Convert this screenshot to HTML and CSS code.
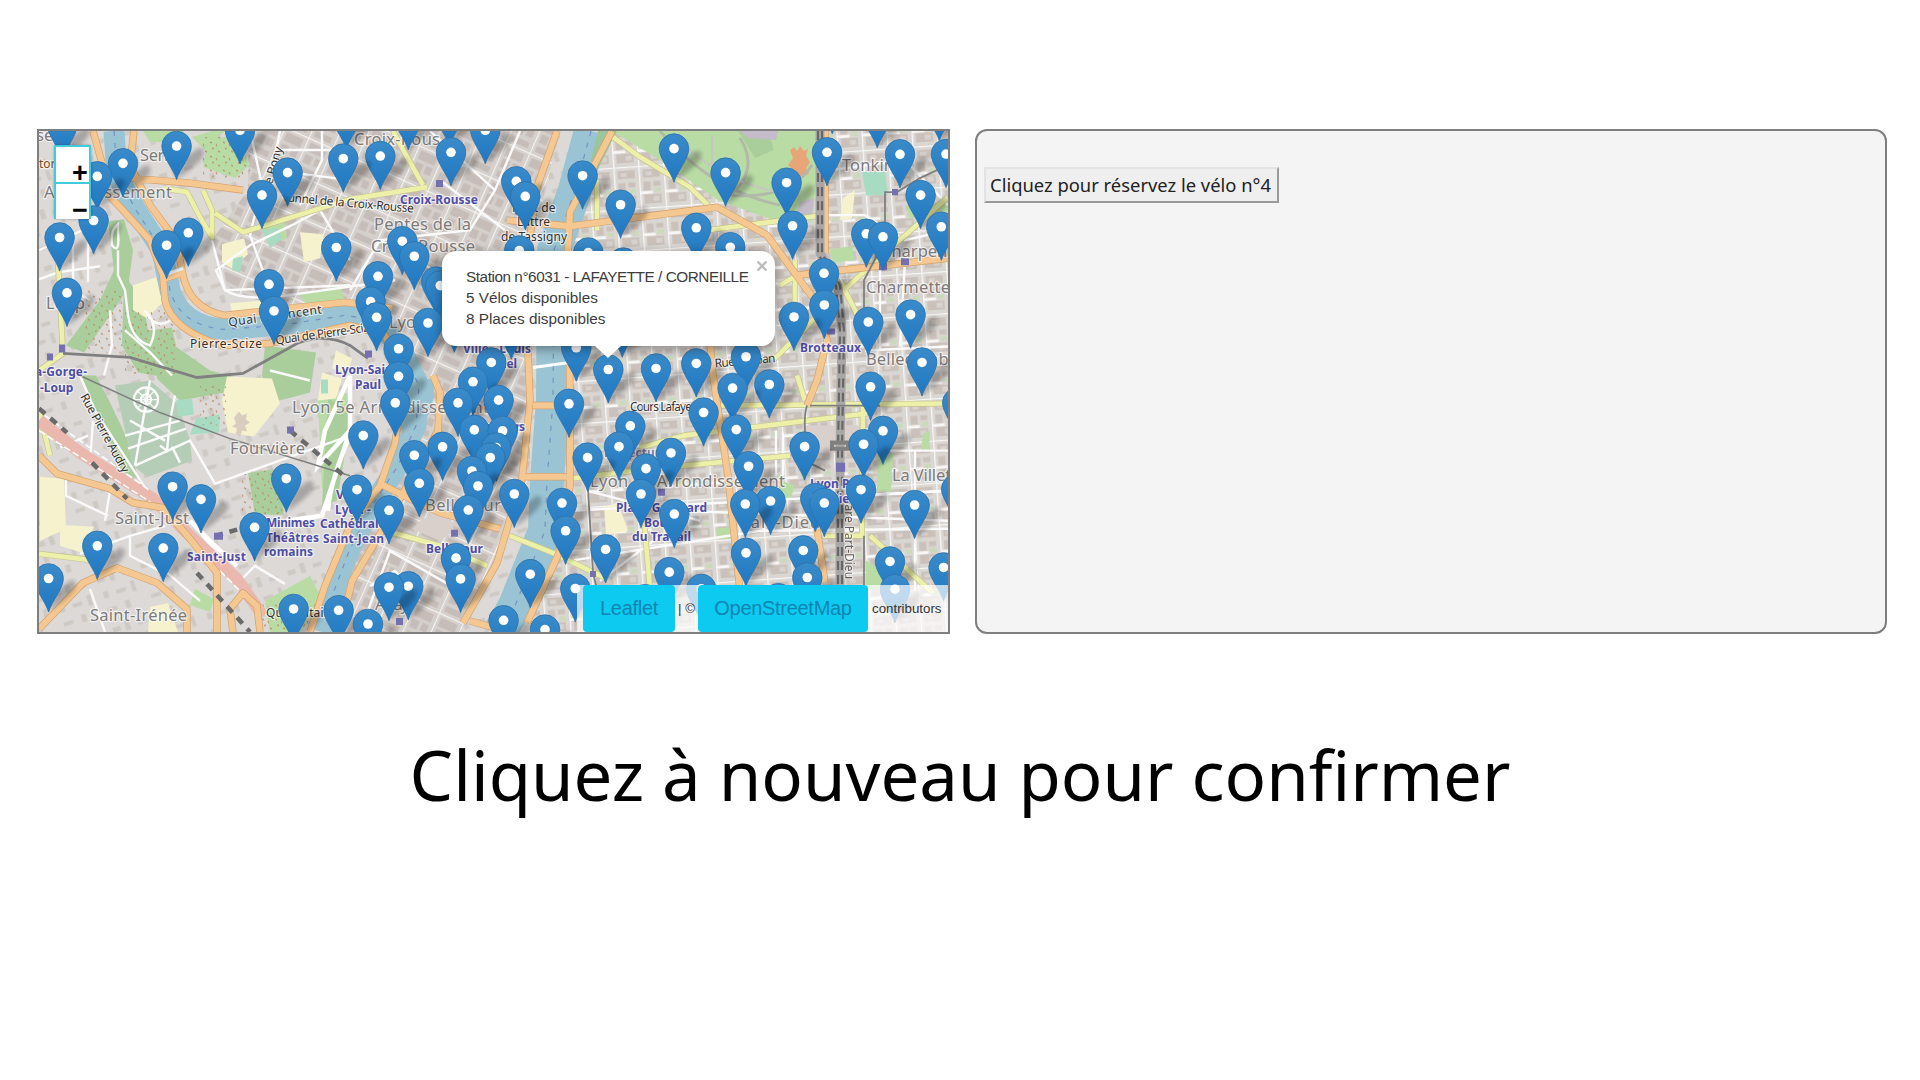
FILE: index.html
```html
<!DOCTYPE html>
<html lang="fr">
<head>
<meta charset="utf-8">
<title>Réservation de vélos</title>
<link rel="stylesheet" href="styles.css">
</head>
<body>
<main class="page">
  <div class="panels">
    <section class="map">
      <svg class="map-canvas" viewBox="39 131 909 500" preserveAspectRatio="none">
        <defs>
          <linearGradient id="pinFill" x1="0" y1="0" x2="0" y2="1">
            <stop offset="0" stop-color="#3a8bc9"/><stop offset="1" stop-color="#1f78c2"/>
          </linearGradient>
          <filter id="soft" x="-50%" y="-50%" width="200%" height="200%"><feGaussianBlur stdDeviation="2.2"/></filter>
          <g id="pin">
            <path d="M0 33L8 12L22 2Q30 2 26 11Q20 20 0 33Z" fill="#000" opacity=".24" filter="url(#soft)"/>
            <path d="M0 33.500C-3 23-14.800 10-14.800 0A14.800 14.800 0 0 1 14.800 0C14.800 10 3 23 0 33.500Z" fill="url(#pinFill)" stroke="#2a70ab" stroke-width=".8"/>
            <circle r="4.800" fill="#fff"/>
          </g>
          <pattern id="east" width="25" height="42" patternUnits="userSpaceOnUse" patternTransform="rotate(-4)">
            <rect width="25" height="42" fill="#dad6d2"/>
            <path d="M4 4h17v8H4zM4 16h7v9H4zM14 16h7v5h-7zM4 29h17v9H4z" fill="#cbc1bb"/>
            <path d="M7 6h6v4H7zM13 31h6v5h-6z" fill="#d8d3ce"/><path d="M15 23h6v4h-6z" fill="#c9dab9"/>
            <path d="M0 0V42M0 0H25M0 27H13" stroke="#f8f7f5" stroke-width="2.600" fill="none"/>
          </pattern>
          <pattern id="mid" width="26" height="38" patternUnits="userSpaceOnUse" patternTransform="rotate(24)">
            <rect width="26" height="38" fill="#d5d0cc"/>
            <path d="M4 4h18v9H4zM4 16h8v9H4zM15 16h7v8h-7zM4 29h18v6H4z" fill="#c7bdb8"/>
            <path d="M0 0V38M0 0H26" stroke="#f5f3f1" stroke-width="2.200" fill="none"/>
          </pattern>
          <pattern id="west" width="46" height="52" patternUnits="userSpaceOnUse" patternTransform="rotate(-18)">
            <rect width="46" height="52" fill="#dcd9d7"/>
            <path d="M5 7h8v5H5zM18 4h5v10h-5zM31 8h9v4h-9zM7 22h5v7H7zM20 24h10v4H20zM36 20h4v11h-4zM6 39h10v4H6zM25 37h5v8h-5z" fill="#cfc9c4"/>
          </pattern>
          <pattern id="trees" width="13" height="14" patternUnits="userSpaceOnUse">
            <path d="M2 2l2 1M8 4l1 2M4 9l2-1M10 11l2 1" stroke="#b78b61" stroke-width="1.100"/>
          </pattern>
          <path id="yellow-roads" d="M163 188L187 192 200 217 212 237V210L203 190M215 213L243 232 350 199 427 187M393 131L406 155 423 185M613 137L640 157 690 187 709 206M707 230L823 215M948 197L840 293 773 360M650 468L790 455M640 447L683 435 867 413M717 405L948 403M797 375L805 400M863 405L862 535H823M870 535L933 592M643 508L650 588M393 532L440 545 487 565M510 535L553 552 607 578M570 478L650 468M58 263L63 353 39 370M39 410L50 455M39 553L97 560M795 260V305M840 280L865 330M780 285L797 275M597 180V230"/>
          <path id="main-roads" d="M93 131L102 163 100 186 123 210 150 240 163 275 165 300Q172 330 222 345L270 343 350 325 385 335 405 375M134 131L130 165 150 205 176 240 183 275Q190 308 224 315L345 302 392 308M130 178L190 183 243 190M165 278L184 272M557 131L537 187 528 250V353L530 400 522 478 497 562 463 622M612 131L570 212 568 250 570 395V485L560 550 527 622M507 220L570 226 640 217 717 207 767 235 820 307 827 340 817 380 807 405M533 405H570M522 476H570M710 340L713 375 728 475 740 590M817 528L825 582M825 131V253M797 275L948 258M407 370L395 442 380 485 350 525 325 585 310 631M433 375L440 392 438 430 410 480 376 540 352 580 340 631M380 483L410 498 440 512 500 528M39 455L57 473 110 488 133 502 163 507 190 538 217 572V631M39 628L83 582 117 567 157 582 187 608V631M260 631L257 605 243 592 230 608 233 631M470 620L510 631"/>
        </defs>

        <!-- Land -->
        <rect x="39" y="131" width="909" height="500" fill="url(#west)"/>
        <path d="M248 131H560L530 250V480L460 631H325L352 540 400 460 420 390 380 318 300 315 230 290 212 240 248 190Z" fill="url(#mid)"/>
        <path d="M600 131H948V631H530L572 480V220Z" fill="url(#east)"/>

        <!-- Parks, woods and school grounds -->
        <g fill="#b9dca5">
          <path d="M612 131H818V160L813 214 776 221 718 200 660 160Z"/>
          <path d="M208 141L236 134 250 165 235 178 203 167Z"/>
          <path d="M143 131H185L170 142H150Z"/>
          <path d="M192 137L212 131H225L205 150Z"/>
          <path d="M318 400L352 392 342 470 322 488Z"/>
          <path d="M195 588L214 598 210 611 190 604Z"/>
          <path d="M265 600L310 575 322 598 300 631H270Z"/>
          <path d="M262 222L284 218 287 238 268 244Z"/>
          <path d="M300 295L340 285 345 302 310 310Z"/>
          <path d="M866 560L884 570 880 588H866ZM877 453L893 453 891 491H877ZM716 528L732 526 734 538 717 538Z"/>
          <path d="M830 249L852 246 855 260 833 262ZM782 480L795 485 790 500 778 497Z"/>
          <path d="M906 206L948 202V212L910 218ZM923 433L930 430 929 450 921 448Z"/>
        </g>
        <g fill="#a9ce9c">
          <path d="M108 221L124 219 133 250 128 288 108 318 84 352 66 345 100 300 114 270Z"/>
          <path d="M124 275L143 300 148 330 172 327 176 345 160 376 138 372 122 345Z"/>
          <path d="M80 375H96L110 402 128 440 138 478 121 470 106 430Z"/>
          <path d="M265 345L316 352 310 392 272 402 262 375Z"/>
          <path d="M160 335L210 370 240 378 225 392 180 400 157 378Z"/>
          <path d="M328 398L352 410 337 500 322 505Z"/>
          <path d="M248 472L280 468 284 514 255 514Z"/>
          <path d="M738 131H768L774 150 755 158Z"/>
        </g>
        <path d="M115 385L150 380 178 404 190 440 192 460 148 476 132 465 125 430Z" fill="#b5cdb6"/>
        <g fill="#f6f2cd">
          <path d="M133 285L156 277 164 301 147 318 133 310Z"/>
          <path d="M227 376L272 378 280 403 254 436 228 432 222 400Z"/>
          <path d="M40 476L64 478 66 528 40 540Z"/>
          <path d="M150 606L168 602 178 631H148Z"/>
          <path d="M222 244L244 238 248 254 232 268 222 262Z"/>
          <path d="M230 303L262 300 262 320 234 322ZM60 524L94 526 82 552 60 545Z"/>
          <path d="M300 232L324 234 320 258 304 262Z"/>
          <path d="M843 198L855 190 852 218 840 220ZM604 506L618 502 628 530 606 534Z"/>
          <path d="M336 350L352 358 348 372 332 368Z"/>
          <path d="M322 372L342 378 336 398 318 400Z"/>
        </g>
        <path d="M234 417l5-6 3 4 5-2-1 6 4 3-5 3 2 6-5-1-2 7-4-4 1-5-5-2 4-3z" fill="#d8cdbf"/>
        <path d="M196 418L220 414 219 432 190 434ZM176 400L192 398 194 414 178 416ZM262 230L278 228 282 238 270 248ZM233 258L243 256 240 272 232 270ZM862 172L885 172 888 195 866 195ZM321 379H328V393H321Z" fill="#a8dcc2"/>
        <path d="M790 150L794 147 797 151 800 146 804 151 808 149 806 156 810 162 806 168 809 174 803 176 800 181 796 176 790 177 793 170 788 165 793 158Z" fill="#e8a678"/>
        <path d="M740 131H778L776 140 748 138ZM800 202L814 198 812 214 795 218Z" fill="#c4bcc8"/>
        <path d="M803 425H865V452H803ZM412 528Q430 508 450 515L454 530 440 540Z" fill="#d9cfcb"/>
        <path d="M203 137H250V178H203ZM242 470H286V514H242ZM200 385H226V425H200ZM84 290H122V352H84ZM125 310H175V374H125ZM255 600H315V631H255Z" fill="url(#trees)"/>
        <path d="M660 131Q710 190 780 205M740 138Q760 170 730 195Q790 200 812 165" fill="none" stroke="#b3b9a8" stroke-width="3"/>
        <path d="M680 140Q720 185 800 196M712 135V175" fill="none" stroke="#c9c6c0" stroke-width="2"/>

        <!-- Rivers -->
        <g fill="none" stroke="#9ac4d3">
          <path d="M114 131L117 175 136 210 162 250 170 290Q180 325 224 329L280 325 345 315 378 320 402 350 419 385 416 425 398 465 372 505 350 548 334 590 322 631" stroke-width="21"/>
          <path d="M591 131L575 190 554 250 553 400 547 480 545 530 515 605 500 631" stroke-width="34"/>
          <path d="M400 425Q425 410 420 380" stroke-width="26"/>
        </g>
        <path d="M114 131L117 175 136 210 162 250 170 290Q180 325 224 329L280 325 345 315 378 320 402 350 419 385 416 425 398 465 372 505 350 548 334 590M591 131L575 190 554 250 553 400 547 480 545 530 515 605" fill="none" stroke="#7690c5" stroke-width="1.200" stroke-dasharray="5 7"/>
        <path d="M617 131L590 185 586 180 598 131Z" fill="#9cc59b"/>

        <!-- Minor streets -->
        <g class="street">
          <path d="M39 279L58 272 100 266M58 245V300M73 235V290L90 300M88 240V282M39 250L100 222"/>
          <path d="M250 131L262 185 250 235M280 131L272 170 350 180M322 131V160L300 205M276 150H350M212 240L225 290 350 285M225 290L216 270 250 245 292 225 320 210 350 260M250 235L270 290"/>
          <path d="M225 290Q240 300 280 296L395 280"/>
          <path d="M118 224Q110 230 112 245Q120 255 118 232ZM118 250V275L125 290 128 315Q132 340 150 345Q160 325 145 310Q155 330 170 320M125 330L150 352 172 375"/>
          <path d="M110 310L112 345 104 375M80 375L95 410 160 510"/>
          <path d="M60 430L90 462 93 420M60 447L88 435M66 475V495L108 515M110 490L105 520"/>
          <path d="M175 395L170 420 167 450 160 445M135 465L190 440 215 483 350 435M130 420L165 440M125 435L180 420M128 448L186 428M150 380L135 465M172 446L180 462"/>
          <circle cx="146" cy="399" r="12"/><circle cx="146" cy="399" r="5"/>
          <path d="M146 387V411M134 399H158M138 391L154 407M154 391L138 407" stroke-width="1.200"/>
          <path d="M80 553L130 535 165 525M130 535V555L160 570M90 588L105 631M165 570L200 600M240 580L255 565 285 583M270 370L310 380M190 520L240 580"/>
          <path d="M430 131L495 190 470 230 380 240 350 290M495 190L520 131M440 180L505 230M380 240L470 290"/>
          <path d="M370 585L395 570 420 600M360 631L390 550 460 590M680 510L948 520M570 560L760 530 948 528M570 510L948 490M588 490L700 520M600 580L660 535"/>
          <path d="M823 215H865L905 240 948 230M830 170L905 160 948 205M865 350L948 346M880 253V350M905 260L900 346M915 450V590M890 450H948M860 495L948 490M776 430V475M783 432V475"/>
        </g>
        <path d="M350 375L325 430 318 465 350 430M350 375L350 430 322 515 286 520M190 520L215 545 237 565M350 435Q330 480 328 510" fill="none" stroke="#fff" stroke-width="4.500"/>

        <!-- Roads -->
        <use href="#yellow-roads" class="road road-case"/>
        <use href="#yellow-roads" class="road road-yellow"/>
        <path d="M39 420L80 452 153 498 190 535 237 578 263 615" fill="none" stroke="#ebb8ae" stroke-width="12"/>
        <path d="M39 430L153 503 240 590M45 415L150 490" fill="none" stroke="#fff" stroke-width="1.500" stroke-dasharray="7 3"/>
        <use href="#main-roads" class="road road-edge"/>
        <use href="#main-roads" class="road road-orange"/>
        <path d="M533 367L570 362M166 274L183 268" stroke="#fff" stroke-width="3"/>

        <!-- Rail and metro -->
        <g fill="none" stroke="#808080">
          <path d="M63 353L130 357 197 377 243 373 297 343Q325 332 350 345L368 358" stroke-width="2.800"/>
          <path d="M80 375L160 412 230 438 350 475" stroke-width="1.500"/>
          <path d="M820 131V253L838 285 842 330 840 450V590" stroke-width="9" stroke="#aaa8a7"/>
          <path d="M818 131V253L836 285 840 330 838 450V590M822 131V253L840 285 844 330 842 450V590" stroke="#686767" stroke-width="2.200" stroke-dasharray="9 5"/>
          <path d="M832 442H848V448H832Z" stroke-width="4"/>
          <path d="M948 165L920 178 897 192H885V240L864 280V330M864 535V631M807 405Q804 415 805 430V440M810 405H880M588 488L593 572 600 600M805 460L825 470" stroke-width="1.800"/>
          <path d="M39 408L67 432M92 462L127 498M197 572L250 631M290 430L350 480M215 535L240 528" stroke="#6a6a6a" stroke-width="4.500" stroke-dasharray="8 7"/>
        </g>
        <path d="M59 344h6v8h-6zM47 353h6v7h-6zM436 180h7v7h-7zM365 350h7v7h-7zM287 426h7v7h-7zM214 532h9v7h-9zM451 529h7v7h-7zM396 617h7v7h-7zM892 189h6v6h-6zM879 263h8v7h-8zM901 258h8v7h-8zM827 328h8v6h-8zM836 462h9v9h-9zM658 488h7v7h-7zM590 570h6v6h-6z" fill="#7570b0"/>

        <!-- Place names -->
        <g class="place">
          <text x="36" y="141">se</text><text x="140" y="161" textLength="38">Serin</text>
          <text x="44" y="198" textLength="128">Arrondissement</text>
          <text x="46" y="309" textLength="39">Loup</text>
          <text x="354" y="145" textLength="86">Croix-Rous</text>
          <text x="374" y="230" textLength="97">Pentes de la</text>
          <text x="371" y="252" textLength="104">Croix-Rousse</text>
          <text x="389" y="328">Lyon</text>
          <text x="292" y="412" textLength="197">Lyon 5e Arrondissement</text>
          <text x="230" y="453" textLength="75">Fourvière</text>
          <text x="115" y="523" textLength="74">Saint-Just</text>
          <text x="90" y="620" textLength="97">Saint-Irénée</text>
          <text x="425" y="510" textLength="76">Bellecour</text>
          <text x="375" y="609" textLength="34">Ainay</text>
          <text x="590" y="486" textLength="195">Lyon 3e Arrondissement</text>
          <text x="740" y="527" textLength="80">Part-Dieu</text>
          <text x="842" y="171" textLength="52">Tonkin</text>
          <text x="881" y="257">Charpennes</text>
          <text x="866" y="293" textLength="92">Charmettes</text>
          <text x="866" y="365" textLength="92">Bellecombe</text>
          <text x="892" y="480" textLength="65">La Villett</text>
        </g>
        <g class="street-name">
          <text x="39" y="168" fill="#7a4a10">tor</text>
          <text x="190" y="348" textLength="72">Pierre-Scize</text>
          <text transform="translate(272 185)rotate(-74)">e Bony</text>
          <text transform="translate(282 201)rotate(5)" textLength="132">Tunnel de la Croix-Rousse</text>
          <text x="512" y="212">Pont de</text><text x="517" y="226">Lattre</text><text x="501" y="241" textLength="66">de Tassigny</text>
          <text transform="translate(229 326)rotate(-8)" textLength="94">Quai St-Vincent</text>
          <text transform="translate(276 344)rotate(-8)" textLength="100">Quai de Pierre-Scize</text>
          <text transform="translate(80 396)rotate(61)" textLength="88">Rue Pierre Audry</text>
          <text x="266" y="616" textLength="72">Quarantaine</text>
          <text x="630" y="410" textLength="62">Cours Lafaye</text>
          <text transform="translate(715 367)rotate(-5)" textLength="61">Rue Vauban</text>
          <text transform="translate(845 495)rotate(90)" opacity=".7">Gare Part-Dieu</text>
        </g>
        <g class="station">
          <text x="400" y="204" textLength="78">Croix-Rousse</text>
          <text x="35" y="376" textLength="52">a-Gorge-</text><text x="40" y="391">-Loup</text>
          <text x="335" y="374">Lyon-Saint</text><text x="355" y="388">Paul</text>
          <text x="463" y="353" textLength="68">Ville - Louis</text><text x="480" y="368" textLength="37">Pradel</text>
          <text x="478" y="430" textLength="47">Cordeliers</text>
          <text x="336" y="498">Vieux</text><text x="335" y="513">Lyon -</text><text x="320" y="527">Cathédrale</text><text x="323" y="542" textLength="61">Saint-Jean</text>
          <text x="266" y="526" textLength="49">Minimes</text><text x="266" y="541" textLength="53">Théâtres</text><text x="264" y="555" textLength="49">romains</text>
          <text x="187" y="560" textLength="59">Saint-Just</text><text x="426" y="552" textLength="57">Bellecour</text>
          <text x="616" y="511" textLength="91">Place Guichard</text><text x="644" y="526">Bourse</text><text x="632" y="540" textLength="59">du Travail</text>
          <text x="800" y="352" textLength="61">Brotteaux</text><text x="810" y="487">Lyon Part</text><text x="830" y="502">Dieu</text>
          <text x="604" y="456" opacity=".6">Préfecture</text>
        </g>
        <g id="pins"></g>
      </svg>

      <div class="zoom-control"><span>+</span><span>−</span></div>
      <div class="popup">
        <p class="popup-title">Station n°6031 - LAFAYETTE / CORNEILLE</p>
        <p>5 Vélos disponibles</p>
        <p>8 Places disponibles</p>
        <svg class="popup-close" viewBox="0 0 12 12"><path d="M1.500 1.500L10.500 10.500M10.500 1.500L1.500 10.500"/></svg>
      </div>
      <div class="attribution"><a>Leaflet</a><span class="sep">| ©</span><a>OpenStreetMap</a><span class="tail">contributors</span></div>
    </section>
    <section class="booking"><button class="book">Cliquez pour réservez le vélo n°4</button></section>
  </div>
  <h1 class="caption">Cliquez à nouveau pour confirmer</h1>
</main>
<script src="map.js"></script>
</body>
</html>
```
FILE: styles.css
```css
* { box-sizing: border-box; }
body { margin: 0; background: #fff; color: #000; font-family: "Noto Sans", sans-serif; }
.page { height: 1080px; padding: 129px 33px 0 37px; overflow: hidden; }
.panels { display: grid; grid-template-columns: 913px 912px; gap: 25px; height: 505px; }
.map { position: relative; border: 2px solid #7f7f7f; overflow: hidden; }
.map-canvas { display: block; width: 100%; height: 100%; }

.street { fill: none; stroke: #fafafa; stroke-width: 2.4; }
.road { fill: none; stroke-linejoin: round; }
.road-case { stroke: #c6c391; stroke-width: 6; }
.road-yellow { stroke: #edf0a8; stroke-width: 4.6; }
.road-edge { stroke: #d3a26e; stroke-width: 7.4; }
.road-orange { stroke: #f6c891; stroke-width: 6; }

.map-canvas text { font-family: "Noto Sans", sans-serif; paint-order: stroke; stroke: rgba(255, 255, 255, .65); stroke-width: 2.4px; stroke-linejoin: round; }
.place { font-size: 16.5px; fill: #7d7a79; }
.street-name { font-size: 12px; fill: #353230; }
.station { font-size: 12px; font-weight: 700; fill: #4f4da6; }

.zoom-control { position: absolute; left: 15px; top: 14px; width: 37px; height: 74px; display: grid; grid-template-rows: 37px 37px; border-radius: 4px; box-shadow: 0 0 3px rgba(0, 0, 0, .3); }
.zoom-control span { padding: 10px 0 0 16px; border: 2px solid #43cbdc; border-bottom-width: 0; background: #fff; font: 700 27px/32px "Liberation Sans", sans-serif; }

.popup { position: absolute; left: 403px; top: 120px; width: 333px; height: 95px; padding: 15px 0 0 24px; border-radius: 14px; background: #fff; box-shadow: 0 3px 12px rgba(0, 0, 0, .4); color: #3c3c3c; font: 15.3px/21px "Liberation Sans", sans-serif; white-space: nowrap; }
.popup::after { content: ""; position: absolute; left: 152px; top: 94px; border: 14px solid transparent; border-top: 13px solid #fff; border-bottom: 0; }
.popup p { margin: 0; }
.popup .popup-title { letter-spacing: -.44px; }
.popup-close { position: absolute; right: 7px; top: 9px; width: 12px; height: 12px; stroke: #bdbdbd; stroke-width: 2.4; }

.attribution { position: absolute; right: 0; bottom: 0; width: 371px; height: 47px; padding-left: 6px; display: flex; align-items: center; background: rgba(255, 255, 255, .7); color: #333; font: 13.3px/47px "Liberation Sans", sans-serif; }
.attribution a { height: 47px; border-radius: 4px; background: #0dcaf0; color: #0b86b2; font-size: 20px; letter-spacing: -.3px; text-align: center; }
.attribution a:first-child { width: 92px; }
.attribution .sep { width: 23px; text-align: center; }
.attribution .sep + a { width: 170px; }
.attribution .tail { padding-left: 4px; }

.booking { padding: 36px 0 0 7px; border: 2px solid #7f7f7f; border-radius: 12px; background: #f4f4f4; }
.book { display: block; width: 295px; height: 36px; padding: 0 2px 0 0; border: 2px solid; border-color: #e3e3e3 #999 #999 #e3e3e3; background: #efefef; color: #222; font: 18.4px/30px "Noto Sans", sans-serif; white-space: nowrap; }
.caption { margin: 93px 0 0; padding-right: 4px; text-align: center; font-size: 68.9px; font-weight: 400; line-height: 94px; white-space: nowrap; }
```
FILE: map.js
```js
// Bike stations: centre of each pin's dot, in map units.
const stations = [
  [62,125],[97,176],[122.7,163],[176.3,145.7],[239.7,130],[287.3,172.3],[261.7,194.7],[343,158.3],
  [93.3,220],[59.3,237],[188,232.3],[166.3,244.7],[336,247],[268.7,283.7],[273.7,310.3],[66.7,292.3],
  [346,115],[408,116],[449,112],[380,155.7],[450.7,152],[485,130],[516,181],[525,196],[582.3,175.3],
  [620.3,204.3],[402,240.7],[414,255.7],[519,250],[588,252],[377.7,275.7],[623,262],[370.3,301],
  [376.3,316.7],[440,285],[436,281],[427.7,322.3],[398.3,348],[398.3,375.5],[491,361.7],[576,347],
  [622,323],[511,325],[454,318],[472.7,381],[608,368.7],[655.7,367.7],[673.7,148.3],[725.3,172.3],
  [786.3,182.3],[826.7,152],[899.7,154],[945.7,153.7],[920.3,194.7],[696,227.3],[730,246.7],
  [792.3,225.3],[866,233.3],[882.7,236.3],[941,226.3],[823.7,272.7],[824,304.3],[793.7,316.3],
  [868,321.3],[910.3,314],[921.7,361.7],[745.7,356],[696,362.7],[732.3,387.3],[769,383.7],
  [870.3,386],[877,114],[939,107],[832,100],[172.3,485.7],[200.7,498.3],[286,477.7],[254.3,526.3],
  [97,544.7],[163,547],[48.3,577.3],[293.3,607.7],[338.3,609],[395,402],[457.7,402],[498.3,399.3],
  [568.7,403],[363,434.7],[474,429],[502.3,430],[630,425],[442.3,446],[414,454.3],[496,446.7],
  [490,456.7],[618.7,445.7],[587.3,456.7],[645.7,467.7],[471.7,470],[477.7,485],[419,482.3],
  [356.7,488.7],[388.7,509.3],[468,509],[514,493],[561.7,502],[640.7,493],[565.3,529.7],
  [605.3,548.3],[455.7,557],[460.3,577.7],[530,573],[408,585],[388.7,586],[575,587.3],
  [367.7,622.7],[503.3,619],[544.7,628.3],[669,571],[703.3,411.7],[736,428.7],[882.7,430],
  [863.3,443.3],[804.3,445.7],[670.7,452],[748.3,465.3],[860.7,488.7],[815,497],[824,502],
  [770.3,500],[745,503],[914.3,504],[674,513],[803,549.3],[745.7,551.7],[889.7,560.3],
  [943.3,566.3],[807,576.3],[894.7,588],[701,587.7],[778,597],[645,598],[957,402],[956,488]
];
stations.sort((a, b) => a[1] - b[1]);
document.getElementById("pins").innerHTML = stations
  .map(([x, y]) => `<use href="#pin" x="${x + 0.3}" y="${y + 0.3}"/>`)
  .join("");
```
